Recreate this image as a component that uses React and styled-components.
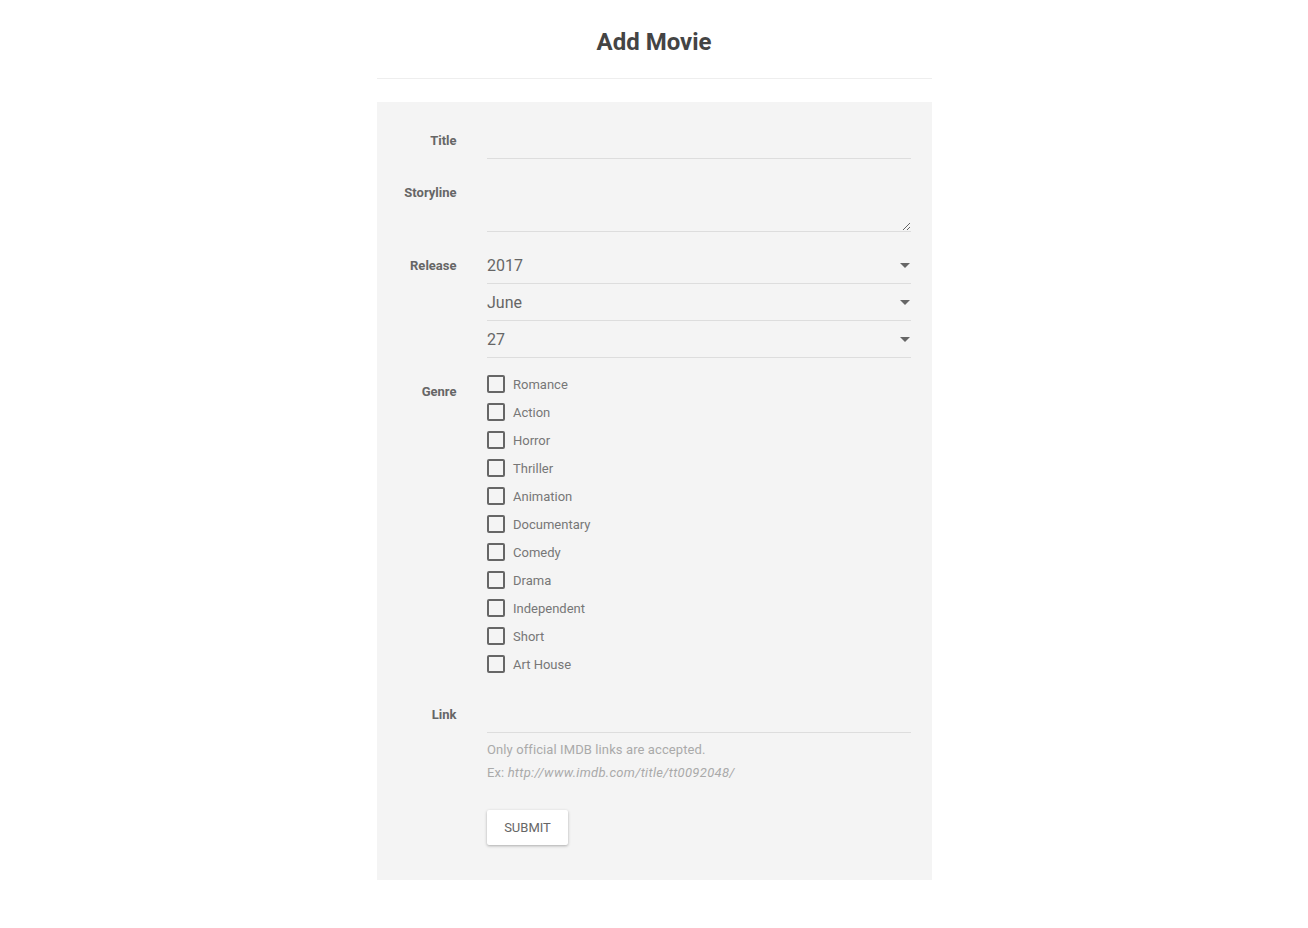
import React from 'react';
import styled, { createGlobalStyle } from 'styled-components';

const GlobalStyle = createGlobalStyle`
  body {
    margin: 0;
    background: #fff;
    font-family: Roboto, "Liberation Sans", Arial, sans-serif;
  }
`;

const Page = styled.div`
  width: 555px;
  margin: 0 auto;
  padding-top: 26px;
  padding-bottom: 48px;
`;

const Heading = styled.h1`
  margin: 0;
  text-align: center;
  font-size: 24px;
  line-height: 32px;
  font-weight: 700;
  color: #444;
  padding-bottom: 20px;
  border-bottom: 1px solid #eee;
`;

const Panel = styled.form`
  margin-top: 23px;
  background: #f4f4f4;
  padding: 20px 21px 35px 0;
  display: flex;
  flex-direction: column;
`;

const Row = styled.div`
  display: grid;
  grid-template-columns: 80px 1fr;
  column-gap: 30.5px;
  margin-top: ${({ $gap }) => $gap || 0}px;
`;

const Label = styled.label`
  text-align: right;
  font-size: 13px;
  font-weight: 700;
  color: #666;
  line-height: ${({ $lh }) => $lh || 36}px;
  padding-top: ${({ $pt }) => $pt || 1}px;
`;

const Field = styled.div`
  display: flex;
  flex-direction: column;
`;

const TextInput = styled.input`
  box-sizing: border-box;
  height: 37px;
  border: none;
  border-bottom: 1px solid #ddd;
  background: transparent;
  outline: none;
  font: inherit;
  font-size: 16px;
  color: #666;
  padding: 0;
`;

const TextArea = styled.textarea`
  box-sizing: border-box;
  height: 58px;
  border: none;
  border-bottom: 1px solid #ddd;
  background: transparent;
  outline: none;
  font: inherit;
  font-size: 16px;
  color: #666;
  padding: 0;
  resize: vertical;
`;

const SelectBox = styled.div`
  box-sizing: border-box;
  position: relative;
  height: 37px;
  border-bottom: 1px solid #ddd;
  display: flex;
  align-items: center;
  font-size: 16px;
  color: #666;
`;

const Arrow = styled.span`
  position: absolute;
  right: 1px;
  top: 16px;
  width: 0;
  height: 0;
  border-left: 5px solid transparent;
  border-right: 5px solid transparent;
  border-top: 5px solid #666;
`;

const CheckList = styled.div`
  display: flex;
  flex-direction: column;
`;

const CheckRow = styled.label`
  display: flex;
  align-items: center;
  height: 28px;
  font-size: 13px;
  color: #777;
`;

const Box = styled.span`
  box-sizing: border-box;
  width: 18px;
  height: 18px;
  border: 2px solid #666;
  border-radius: 2px;
  margin-right: 8px;
`;

const Help = styled.div`
  font-size: 13px;
  line-height: 23px;
  color: #aaa;
  margin-top: 5px;
  letter-spacing: 0.1px;

  em {
    font-style: italic;
    letter-spacing: 0.3px;
  }
`;

const Submit = styled.button`
  align-self: flex-start;
  margin-top: 26px;
  width: 81px;
  height: 35px;
  border: none;
  border-radius: 2px;
  background: #fff;
  box-shadow: 0 1px 3px rgba(0, 0, 0, 0.3);
  font-family: inherit;
  font-size: 13px;
  color: #666;
  cursor: pointer;
`;

const genres = [
  'Romance', 'Action', 'Horror', 'Thriller', 'Animation', 'Documentary',
  'Comedy', 'Drama', 'Independent', 'Short', 'Art House',
];

const Select = ({ value }) => (
  <SelectBox>
    {value}
    <Arrow />
  </SelectBox>
);

const App = () => (
  <>
    <GlobalStyle />
    <Page>
      <Heading>Add Movie</Heading>
      <Panel onSubmit={e => e.preventDefault()}>
        <Row>
          <Label>Title</Label>
          <TextInput type="text" />
        </Row>
        <Row $gap={15}>
          <Label>Storyline</Label>
          <TextArea />
        </Row>
        <Row $gap={15}>
          <Label>Release</Label>
          <Field>
            <Select value="2017" />
            <Select value="June" />
            <Select value="27" />
          </Field>
        </Row>
        <Row $gap={12}>
          <Label $lh={28} $pt={8}>Genre</Label>
          <CheckList>
            {genres.map(g => (
              <CheckRow key={g}>
                <Box />
                {g}
              </CheckRow>
            ))}
          </CheckList>
        </Row>
        <Row $gap={18}>
          <Label>Link</Label>
          <Field>
            <TextInput type="text" />
            <Help>
              Only official IMDB links are accepted.<br />
              Ex: <em>http://www.imdb.com/title/tt0092048/</em>
            </Help>
            <Submit type="submit">SUBMIT</Submit>
          </Field>
        </Row>
      </Panel>
    </Page>
  </>
);

export default App;
